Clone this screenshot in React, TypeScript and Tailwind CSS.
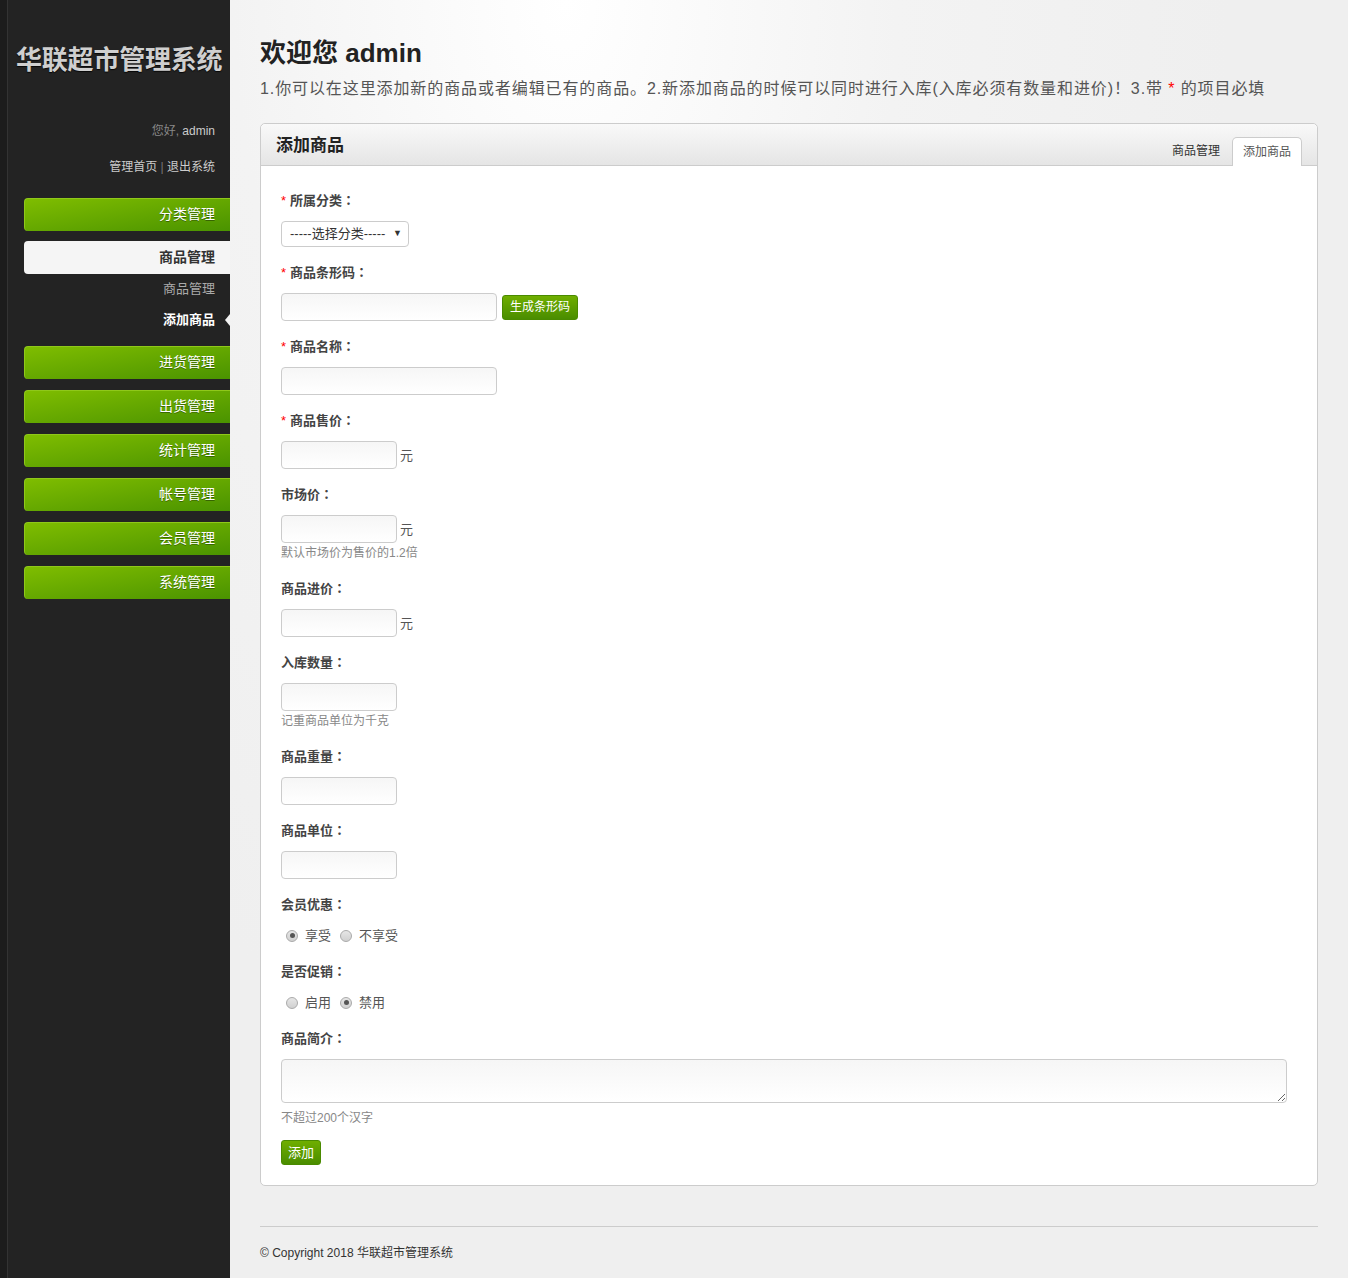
import React from 'react';

const FONT = { fontFamily: '"Liberation Sans", Arial, "Noto Sans CJK SC", sans-serif' };
const TC = { fontFamily: '"Noto Sans CJK TC", sans-serif' };

const menu = ['分类管理', '商品管理', '进货管理', '出货管理', '统计管理', '帐号管理', '会员管理', '系统管理'];

function GreenItem({ label }: { label: string }) {
  return (
    <div className="ml-[16px] h-[33px] rounded-l-[4px] border-t border-l border-[#8fc81a] bg-gradient-to-br from-[#7fbd00] to-[#4a9300] pr-[15px] text-right text-[14px] leading-[30px] text-white [text-shadow:0_1px_0_rgba(0,0,0,0.35)]">
      {label}
    </div>
  );
}

function Sidebar() {
  return (
    <div className="flex w-[230px] shrink-0 bg-[#232323]">
      <div className="w-[8px] shrink-0 border-r border-[#333] bg-[#1c1c1c]" />
      <div className="flex-1 pb-10">
        <div className="pt-[43px] pl-[8px] text-[26px] font-bold leading-[34px] tracking-[-0.2px] text-[#cfcfcf] [text-shadow:0_1px_1px_rgba(0,0,0,0.8)]">
          华联超市管理系统
        </div>
        <div className="mt-[44px] pr-[15px] text-right text-[12px] leading-[20px]">
          <span className="text-[#888]">您好, </span>
          <span className="text-[#ccc]">admin</span>
        </div>
        <div className="mt-[16px] pr-[15px] text-right text-[12px] leading-[20px] text-[#ccc]">
          管理首页 <span className="text-[#777]">|</span> 退出系统
        </div>
        <div className="mt-[21px] flex flex-col">
          <GreenItem label={menu[0]} />
          <div className="ml-[16px] mt-[10px] h-[33px] rounded-l-[4px] bg-[#f5f5f5] pr-[15px] text-right text-[14px] font-bold leading-[33px] text-[#333]">
            商品管理
          </div>
          <div className="mt-[5px] pr-[15px] text-right text-[13px] leading-[20px] text-[#aaa]">商品管理</div>
          <div className="relative mt-[11px] pr-[15px] text-right text-[13px] font-bold leading-[20px] text-white">
            添加商品
            <span className="absolute right-0 top-[4px] h-0 w-0 border-y-[6px] border-r-[5px] border-y-transparent border-r-[#f3f3f3]" />
          </div>
          <div className="mt-[16px] flex flex-col gap-[11px]">
            {menu.slice(2).map(m => (
              <GreenItem key={m} label={m} />
            ))}
          </div>
        </div>
      </div>
    </div>
  );
}

const inputCls =
  'h-[28px] rounded-[4px] border border-[#ccc] bg-gradient-to-b from-[#f6f6f6] to-white px-2 text-[13px] outline-none';

function Label({ text, req }: { text: string; req?: boolean }) {
  return (
    <div className="mb-[11px] h-[20px] text-[13px] font-bold leading-[20px] text-[#444]">
      {req && <span className="mr-[4px] font-normal text-[#f00]">*</span>}
      {text}
      <span style={TC}>：</span>
    </div>
  );
}

function Help({ text }: { text: string }) {
  return <div className="h-[20px] text-[12px] leading-[20px] text-[#888]">{text}</div>;
}

function Radio({ checked, label }: { checked?: boolean; label: string }) {
  return (
    <span className="mr-[4px] inline-flex items-center">
      <span className="ml-[5px] mr-[7px] flex h-[12px] w-[12px] items-center justify-center rounded-full border border-[#aaa] bg-gradient-to-b from-[#e6e6e6] to-[#d0d0d0]">
        {checked && <span className="h-[5px] w-[5px] rounded-full bg-[#555]" />}
      </span>
      <span className="text-[13px] text-[#555]">{label}</span>
    </span>
  );
}

function Field({ children }: { children: React.ReactNode }) {
  return <div className="mb-[15px]">{children}</div>;
}

function PriceInput() {
  return (
    <div className="flex items-center">
      <input className={inputCls + ' w-[116px]'} />
      <span className="ml-[3px] mt-[2px] text-[13px] text-[#555]">元</span>
    </div>
  );
}

function Form() {
  return (
    <div className="pl-[20px] pr-[30px] pt-[24px] pb-[20px]">
      <Field>
        <Label text="所属分类" req />
        <div className="flex h-[26px] w-[128px] items-center justify-between rounded-[4px] border border-[#ccc] bg-white pl-[8px] pr-[6px] text-[13px] text-[#333]">
          <span>-----选择分类-----</span>
          <span className="text-[9px]">▼</span>
        </div>
      </Field>
      <Field>
        <Label text="商品条形码" req />
        <div className="flex items-center gap-[5px]">
          <input className={inputCls + ' w-[216px]'} />
          <button className="h-[25px] rounded-[3px] border border-[#4a8a00] bg-gradient-to-b from-[#6fae00] to-[#4a8d00] px-[7px] text-[12px] leading-[23px] text-white">
            生成条形码
          </button>
        </div>
      </Field>
      <Field>
        <Label text="商品名称" req />
        <input className={inputCls + ' block w-[216px]'} />
      </Field>
      <Field>
        <Label text="商品售价" req />
        <PriceInput />
      </Field>
      <Field>
        <Label text="市场价" />
        <PriceInput />
        <Help text="默认市场价为售价的1.2倍" />
      </Field>
      <Field>
        <Label text="商品进价" />
        <PriceInput />
      </Field>
      <Field>
        <Label text="入库数量" />
        <input className={inputCls + ' block w-[116px]'} />
        <Help text="记重商品单位为千克" />
      </Field>
      <Field>
        <Label text="商品重量" />
        <input className={inputCls + ' block w-[116px]'} />
      </Field>
      <Field>
        <Label text="商品单位" />
        <input className={inputCls + ' block w-[116px]'} />
      </Field>
      <Field>
        <Label text="会员优惠" />
        <div className="flex h-[21px] items-center">
          <Radio checked label="享受" />
          <Radio label="不享受" />
        </div>
      </Field>
      <Field>
        <Label text="是否促销" />
        <div className="flex h-[21px] items-center">
          <Radio label="启用" />
          <Radio checked label="禁用" />
        </div>
      </Field>
      <div>
        <Label text="商品简介" />
        <textarea className="block h-[44px] w-full rounded-[4px] border border-[#ccc] bg-gradient-to-b from-[#f6f6f6] to-white outline-none" />
        <div className="mt-[5px] h-[20px] text-[12px] leading-[20px] text-[#888]">不超过200个汉字</div>
        <button className="mt-[12px] h-[25px] rounded-[3px] border border-[#4a8a00] bg-gradient-to-b from-[#6fae00] to-[#4a8d00] px-[6px] text-[13px] leading-[23px] text-white">
          添加
        </button>
      </div>
    </div>
  );
}

export default function App() {
  return (
    <div className="flex min-h-[1278px] w-full" style={FONT}>
      <Sidebar />
      <div className="flex-1 bg-[#efefef] bg-[radial-gradient(ellipse_at_30%_0%,#ffffff_0%,#f3f3f3_30%,#efefef_60%)] pl-[30px] pr-[30px]">
        <h1 className="pt-[36px] text-[26px] font-bold leading-[34px] text-[#222]">欢迎您 admin</h1>
        <p className="mt-[7px] text-[16px] leading-[24px] tracking-[0.9px] text-[#555]">
          1.你可以在这里添加新的商品或者编辑已有的商品。2.新添加商品的时候可以同时进行入库(入库必须有数量和进价)！3.带 <span className="text-[#f00]">*</span> 的项目必填
        </p>
        <div className="mt-[22px] rounded-[5px] border border-[#ccc] bg-white">
          <div className="flex h-[42px] items-end justify-between rounded-t-[5px] border-b border-[#ccc] bg-gradient-to-b from-[#f9f9f9] to-[#e5e5e5] pl-[15px] pr-[15px]">
            <h2 className="self-center pt-[3px] text-[17px] font-bold text-[#222]">添加商品</h2>
            <div className="flex items-end text-[12px] text-[#333]">
              <span className="mr-[12px] pb-[5px] leading-[18px]">商品管理</span>
              <span className="-mb-px h-[29px] rounded-t-[5px] border border-b-0 border-[#ccc] bg-white px-[10px] pt-[5px] leading-[18px] text-[#555]">
                添加商品
              </span>
            </div>
          </div>
          <Form />
        </div>
        <div className="mt-[40px] border-t border-[#ccc] pt-[16px] pb-[20px] text-[12px] leading-[20px] text-[#333]">
          © Copyright 2018 华联超市管理系统
        </div>
      </div>
    </div>
  );
}
